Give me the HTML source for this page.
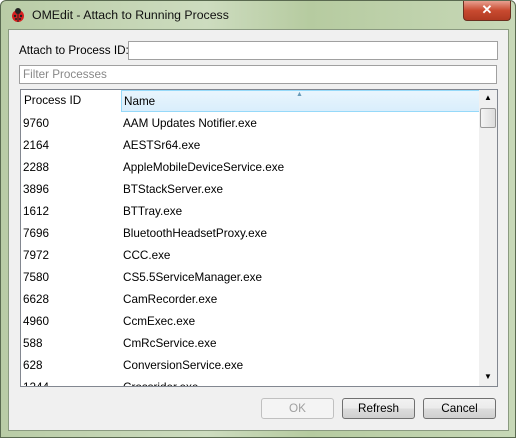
<!DOCTYPE html><html><head><style>
body{margin:0;width:516px;height:438px;overflow:hidden;font-family:"Liberation Sans",sans-serif;font-size:11.7px;}
*{white-space:nowrap}
.win{position:absolute;left:0;top:0;width:514px;height:436px;border:1px solid #5a6a50;border-radius:6px 6px 0 0;background:linear-gradient(90deg,#b9cca6 0%,#cddcbf 40%,#b6cba0 60%,#c7d8b7 100%);}
.title{position:absolute;left:31px;top:7px;color:#111;font-size:12.3px}
.close{position:absolute;left:462px;top:0;width:46px;height:19px;background:linear-gradient(#e8a090,#c84a30 50%,#b03a22);border:1px solid #6a3020;border-top:none;border-radius:0 0 4px 4px;color:#fff;text-align:center;font-weight:bold;font-size:13px;line-height:18px}
.client{position:absolute;left:8px;top:29px;width:499px;height:400px;background:#f0f0f0;border:1px solid #8a9a80}
.abs{position:absolute}
.inp{position:absolute;background:#fff;border:1px solid #a0a0a0}
.list{position:absolute;left:20px;top:89px;width:476px;height:296px;border:1px solid #828790;background:#fff;overflow:hidden}
.row{position:absolute;left:0;height:22px;line-height:22px}
.btn{position:absolute;top:398px;width:71px;height:19px;border:1px solid #707070;border-radius:3px;background:linear-gradient(#f2f2f2,#ebebeb 50%,#dddddd 50%,#cfcfcf);text-align:center;line-height:19px}
</style></head><body>
<div class="win">
<svg class="abs" style="left:8px;top:6px" width="18" height="16"><circle cx="9" cy="9" r="6" fill="#d82020"/><path d="M9 3v12" stroke="#222"/><circle cx="9" cy="4" r="3" fill="#222"/><circle cx="6" cy="9" r="1.2" fill="#222"/><circle cx="12" cy="9" r="1.2" fill="#222"/><circle cx="7" cy="12" r="1" fill="#222"/><circle cx="11" cy="12" r="1" fill="#222"/></svg>
<div class="title">OMEdit - Attach to Running Process</div>
<div class="close">✕</div>
</div>
<div class="client"></div>
<div class="abs" style="left:19px;top:44px">Attach to Process ID:</div>
<div class="inp" style="left:128px;top:41px;width:368px;height:17px"></div>
<div class="inp" style="left:19px;top:65px;color:#888;line-height:17px;padding-left:3px;box-sizing:border-box;width:478px;height:19px">Filter Processes</div>
<div class="list">
<div class="abs" style="left:0;top:0;width:97px;height:21px;background:#fff;border-right:1px solid #e0e0e0;line-height:22px;padding-left:3px">Process ID</div>
<div class="abs" style="left:100px;top:0;height:20px;background:linear-gradient(#e9f5fd,#d9eefc);border:1px solid #96d9f9;line-height:22px;padding-left:2px;width:355px">Name</div>
<div class="abs" style="left:275px;top:1px;font-size:7px;color:#6a9ab8">▲</div>
<div class="abs" style="left:458px;top:0;width:18px;height:296px;background:#f0f0f0"></div>
<div class="abs" style="left:463px;top:3px;font-size:8px">▲</div>
<div class="abs" style="left:459px;top:18px;width:14px;height:18px;border:1px solid #999;border-radius:2px;background:linear-gradient(90deg,#f4f4f4,#dcdcdc)"></div>
<div class="abs" style="left:463px;top:282px;font-size:8px">▼</div>
<div class="abs" style="left:0;top:23px;width:458px">
<div class="row" style="top:0"><span class="abs" style="left:2px">9760</span><span class="abs" style="left:102px">AAM Updates Notifier.exe</span></div>
<div class="row" style="top:22px"><span class="abs" style="left:2px">2164</span><span class="abs" style="left:102px">AESTSr64.exe</span></div>
<div class="row" style="top:44px"><span class="abs" style="left:2px">2288</span><span class="abs" style="left:102px">AppleMobileDeviceService.exe</span></div>
<div class="row" style="top:66px"><span class="abs" style="left:2px">3896</span><span class="abs" style="left:102px">BTStackServer.exe</span></div>
<div class="row" style="top:88px"><span class="abs" style="left:2px">1612</span><span class="abs" style="left:102px">BTTray.exe</span></div>
<div class="row" style="top:110px"><span class="abs" style="left:2px">7696</span><span class="abs" style="left:102px">BluetoothHeadsetProxy.exe</span></div>
<div class="row" style="top:132px"><span class="abs" style="left:2px">7972</span><span class="abs" style="left:102px">CCC.exe</span></div>
<div class="row" style="top:154px"><span class="abs" style="left:2px">7580</span><span class="abs" style="left:102px">CS5.5ServiceManager.exe</span></div>
<div class="row" style="top:176px"><span class="abs" style="left:2px">6628</span><span class="abs" style="left:102px">CamRecorder.exe</span></div>
<div class="row" style="top:198px"><span class="abs" style="left:2px">4960</span><span class="abs" style="left:102px">CcmExec.exe</span></div>
<div class="row" style="top:220px"><span class="abs" style="left:2px">588</span><span class="abs" style="left:102px">CmRcService.exe</span></div>
<div class="row" style="top:242px"><span class="abs" style="left:2px">628</span><span class="abs" style="left:102px">ConversionService.exe</span></div>
<div class="row" style="top:264px"><span class="abs" style="left:2px">1244</span><span class="abs" style="left:102px">Crossrider.exe</span></div>
</div>
</div>
<div class="btn" style="left:261px;color:#a0a0a0;border-color:#c0c0c0;background:#f4f4f4">OK</div>
<div class="btn" style="left:342px">Refresh</div>
<div class="btn" style="left:423px">Cancel</div>
</body></html>
